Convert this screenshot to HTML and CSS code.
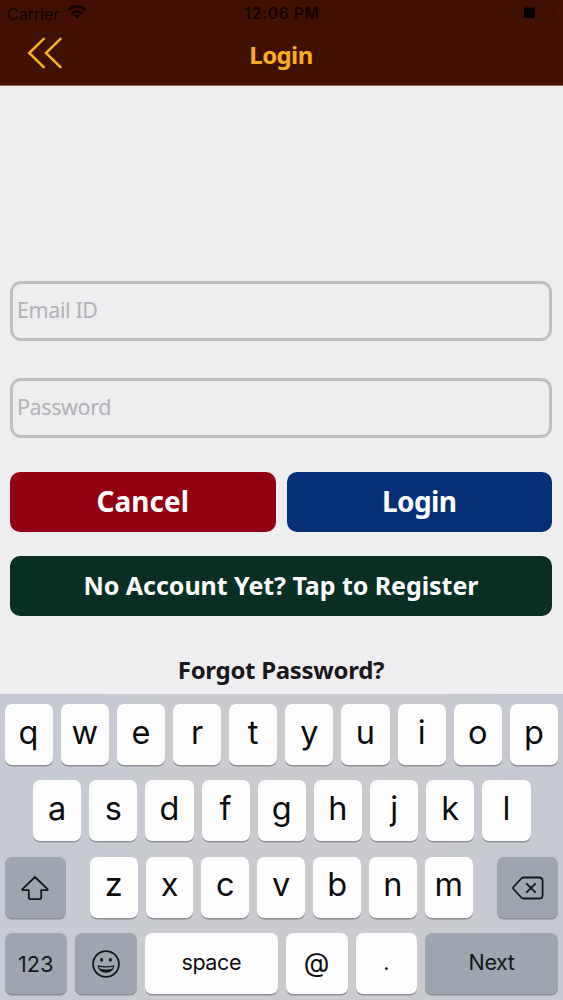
FILE: index.html
```html
<!DOCTYPE html>
<html lang="en">
<head>
<meta charset="utf-8">
<title>Login</title>
<link rel="stylesheet" href="styles.css">
</head>
<body>
<header class="header">
  <div class="status">
    <div class="status-left"><span>Carrier</span>
      <svg class="wifi" width="20" height="14" viewBox="0 0 20 14"><g fill="none" stroke="#150400" stroke-width="2.6"><path d="M1.2 5.2Q10-2.4 18.8 5.2"/><path d="M4.5 8.7Q10 4 15.5 8.7"/></g><path d="M7 10.8Q10 8.4 13 10.8L10 14Z" fill="#150400"/></svg>
    </div>
    <span class="time">12:06 PM</span>
    <svg class="battery" width="34" height="16" viewBox="0 0 34 16"><rect x=".7" y="1" width="28" height="13.5" rx="2" fill="none" stroke="#351000"/><rect x="2" y="2.5" width="11" height="10.5" rx="1" fill="#000"/><path d="M31 5.5v5" stroke="#351000" stroke-width="2"/></svg>
  </div>
  <nav class="nav">
    <svg class="back" width="36" height="34" viewBox="0 0 36 34"><path d="M17.5 2.2 2.2 17l15.3 14.8M34.2 2.2 19 17l15.2 14.8" fill="none" stroke="#f9b020" stroke-width="2.5"/></svg>
    <h1 class="title">Login</h1>
  </nav>
</header>
<main class="form">
  <input class="field" type="text" placeholder="Email ID" aria-label="Email ID">
  <input class="field" type="password" placeholder="Password" aria-label="Password">
  <div class="actions">
    <button class="btn cancel">Cancel</button>
    <button class="btn login">Login</button>
  </div>
  <button class="btn register">No Account Yet? Tap to Register</button>
  <a class="forgot">Forgot Password?</a>
</main>
<section class="keyboard">
  <div class="row top"><span class="key">q</span><span class="key">w</span><span class="key">e</span><span class="key">r</span><span class="key">t</span><span class="key">y</span><span class="key">u</span><span class="key">i</span><span class="key">o</span><span class="key">p</span></div>
  <div class="row home"><span class="key">a</span><span class="key">s</span><span class="key">d</span><span class="key">f</span><span class="key">g</span><span class="key">h</span><span class="key">j</span><span class="key">k</span><span class="key">l</span></div>
  <div class="row lower">
    <span class="key dark side"><svg width="28" height="26" viewBox="0 0 28 26"><path d="M14 2 1.4 14.2q-.7.9.5.9H7.8v7.5q0 1.6 1.6 1.6h9.2q1.6 0 1.6-1.6v-7.5h5.9q1.2 0 .5-.9Z" fill="none" stroke="#101820" stroke-width="1.8" stroke-linejoin="round"/></svg></span>
    <div class="letters"><span class="key">z</span><span class="key">x</span><span class="key">c</span><span class="key">v</span><span class="key">b</span><span class="key">n</span><span class="key">m</span></div>
    <span class="key dark side"><svg width="32" height="24" viewBox="0 0 32 24"><path d="M11.5 1.5H27q3.6 0 3.6 3.6v13.8q0 3.6-3.6 3.6H11.5q-1.3 0-2.2-1L1.5 13q-.8-1 0-2L9.3 2.5q.9-1 2.2-1Z" fill="none" stroke="#101820" stroke-width="1.8"/><path d="m14.3 7.3 9.4 9.4m0-9.4-9.4 9.4" stroke="#101820" stroke-width="1.8"/></svg></span>
  </div>
  <div class="row bottom">
    <span class="key dark word num">123</span>
    <span class="key dark"><svg width="28" height="28" viewBox="0 0 28 28"><circle cx="14" cy="14" r="12.9" fill="none" stroke="#101820" stroke-width="1.8"/><ellipse cx="9.6" cy="9.8" rx="1.5" ry="1.9" fill="#101820"/><ellipse cx="18.4" cy="9.8" rx="1.5" ry="1.9" fill="#101820"/><path d="M5.5 15.3Q14 17.2 22.5 15.3 21.3 22.8 14 22.8T5.5 15.3Z" fill="#101820"/><path d="M7 16.7q7 1.5 14 0l-.8 2.1q-6.2 1.3-12.4 0Z" fill="#9ea5af"/></svg></span>
    <span class="key word space">space</span>
    <span class="key at">@</span>
    <span class="key word dot">.</span>
    <span class="key dark word">Next</span>
  </div>
</section>
</body>
</html>
```
FILE: styles.css
```css
* { box-sizing: border-box; }
body {
  margin: 0;
  width: 563px;
  height: 1000px;
  overflow: hidden;
  display: flex;
  flex-direction: column;
  background: #eeedef;
  font-family: "Noto Sans", sans-serif;
}
.header {
  height: 86px;
  background: #421000;
  border-bottom: 1px solid #82665e;
}
.status {
  height: 28px;
  display: grid;
  grid-template-columns: 1fr auto 1fr;
  align-items: center;
  padding: 0 6px 0 7px;
  color: #150400;
  font: 16px/26px Inter, sans-serif;
}
.status-left { display: flex; align-items: center; gap: 8px; }
.wifi { margin-bottom: 4px; }
.time { font-weight: 600; font-size: 15.5px; letter-spacing: .7px; }
.battery { justify-self: end; margin: 0 1px 3px 0; }
.nav {
  display: grid;
  grid-template-columns: 1fr auto 1fr;
  padding: 8px 28px 0 27px;
}
.title {
  margin: 2px 0 0;
  color: #f9b020;
  font-size: 24px;
  line-height: 33px;
  font-weight: 700;
  letter-spacing: -.6px;
}
.form {
  height: 608px;
  padding: 195px 11px 0 10px;
  display: flex;
  flex-direction: column;
}
.field {
  height: 60px;
  margin: 0 0 36.5px;
  padding: 0 4px 3px;
  border: 3px solid #bfbfc2;
  border-radius: 11px;
  background: transparent;
  outline: none;
  font: 21.5px "Noto Sans", sans-serif;
  letter-spacing: -.4px;
}
.field + .field { margin-bottom: 34px; }
.field::placeholder { color: #b2b1b5; opacity: 1; }
.actions {
  display: grid;
  grid-template-columns: 1fr 1fr;
  gap: 11px;
  margin-bottom: 24px;
}
.btn {
  height: 60px;
  padding: 0 0 2px;
  border: 0;
  border-radius: 10px;
  color: #fff;
  font: 700 28px "Noto Sans", sans-serif;
}
.cancel { background: #920011; letter-spacing: 0; }
.login { background: #052f77; letter-spacing: -.6px; }
.register { background: #092f25; font-size: 25px; letter-spacing: -.05px; }
.forgot {
  margin-top: 37px;
  text-align: center;
  color: #19171b;
  font-weight: 700;
  font-size: 24px;
  line-height: 33px;
  letter-spacing: -.3px;
}
.keyboard {
  flex: 1;
  padding: 10px 5px 0 4.5px;
  display: flex;
  flex-direction: column;
  gap: 14.4px;
  background: linear-gradient(90deg, #c5cad4, #c9cbcf 30%, #c9cbcf 75%, #c6c9d2);
}
.row { height: 62px; display: grid; gap: 8px; }
.top { grid-template-columns: repeat(10, 1fr); }
.home { grid-template-columns: repeat(9, 1fr); padding: 0 27.5px 0 28.5px; }
.lower { grid-template-columns: 61px 383px 61px; gap: 0; justify-content: space-between; }
.letters { display: grid; grid-template-columns: repeat(7, 1fr); gap: 8px; }
.bottom { grid-template-columns: 62.5px 62px 132.5px 62px 61.5px 1fr; }
.key {
  height: 61px;
  display: flex;
  align-items: center;
  justify-content: center;
  padding-bottom: 5px;
  border-radius: 7px;
  background: #fefefe;
  box-shadow: 0 1.5px 0 #8d9095;
  color: #0c0c0e;
  font: 400 32.5px Inter, sans-serif;
}
.key.dark { background: #9ea5af; color: #101820; padding-bottom: 0; }
.key.side { padding-top: 1px; }
.key.word { font-size: 21.5px; letter-spacing: -.4px; padding-bottom: 4px; }
.key.num { padding-bottom: 0; letter-spacing: .2px; }
.key.at { font-size: 26.5px; padding-bottom: 4px; }
```
